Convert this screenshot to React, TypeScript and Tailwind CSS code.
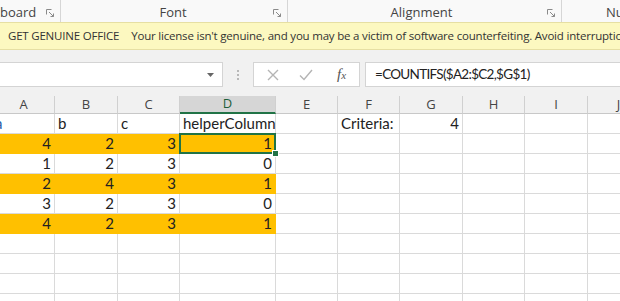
const cols = [
  { key: "A", w: "w-[62px]" },
  { key: "B", w: "w-[63px]" },
  { key: "C", w: "w-[62px]" },
  { key: "D", w: "w-[96px]" },
  { key: "E", w: "w-[62px]" },
  { key: "F", w: "w-[62px]" },
  { key: "G", w: "w-[63px]" },
  { key: "H", w: "w-[62px]" },
  { key: "I", w: "w-[63px]" },
  { key: "J", w: "w-[62px]" },
];

type Cell = { v: string; align?: "l" | "r"; cls?: string };

const rows: { hl: boolean; cells: Cell[] }[] = [
  {
    hl: false,
    cells: [
      { v: "a", align: "l", cls: "text-[#2d5da8] -ml-[1px]" },
      { v: "b", align: "l" },
      { v: "c", align: "l" },
      { v: "helperColumn", align: "l" },
      { v: "" },
      { v: "Criteria:", align: "l" },
      { v: "4" },
    ],
  },
  { hl: true, cells: [{ v: "4" }, { v: "2" }, { v: "3" }, { v: "1" }] },
  { hl: false, cells: [{ v: "1" }, { v: "2" }, { v: "3" }, { v: "0" }] },
  { hl: true, cells: [{ v: "2" }, { v: "4" }, { v: "3" }, { v: "1" }] },
  { hl: false, cells: [{ v: "3" }, { v: "2" }, { v: "3" }, { v: "0" }] },
  { hl: true, cells: [{ v: "4" }, { v: "2" }, { v: "3" }, { v: "1" }] },
  { hl: false, cells: [] },
  { hl: false, cells: [] },
  { hl: false, cells: [] },
  { hl: false, cells: [] },
];

function Launcher() {
  return (
    <svg width="9" height="9" viewBox="0 0 9 9" className="text-[#8a8a8a] mb-[1px]">
      <path d="M0.5 0.5h5M0.5 0.5v5" stroke="currentColor" fill="none" />
      <path d="M3 3l4.5 4.5M7.5 4.5v3h-3" stroke="currentColor" fill="none" />
    </svg>
  );
}

export default function App() {
  return (
    <div className="w-[620px] h-[301px] overflow-hidden bg-white font-['Lato',sans-serif] text-[#222]">
      {/* Ribbon group labels */}
      <div className="h-[22px] flex bg-[#f9f9f9] text-[13px] text-[#444] font-['Open_Sans',sans-serif] leading-none">
        <div className="w-[61px] shrink-0 flex items-end pb-[3px] justify-between pr-[5px] border-r border-[#d6d6d6]">
          <span>board</span>
          <Launcher />
        </div>
        <div className="w-[227px] shrink-0 flex items-end pb-[3px] border-r border-[#d6d6d6] pr-[5px]">
          <span className="flex-1 text-center pl-[12px]">Font</span>
          <Launcher />
        </div>
        <div className="w-[274px] shrink-0 flex items-end pb-[3px] border-r border-[#d6d6d6] pr-[5px]">
          <span className="flex-1 text-center pl-[8px]">Alignment</span>
          <Launcher />
        </div>
        <div className="flex-1 flex items-end pb-[3px] overflow-hidden">
          <span className="pl-[44px] whitespace-nowrap">Number</span>
        </div>
      </div>

      {/* License warning bar */}
      <div className="h-[28px] flex items-center bg-[#fcf8c0] border-y border-[#e6dfa3] whitespace-nowrap overflow-hidden font-['Open_Sans',sans-serif] text-[11.5px] text-[#333] tracking-[-0.2px]">
        <span className="pl-[8px] pr-[12px]">GET GENUINE OFFICE</span>
        <span>
          Your license isn't genuine, and you may be a victim of software counterfeiting. Avoid interruptions
        </span>
      </div>

      {/* Formula bar */}
      <div className="bg-[#f1f1f1] pt-[12px] pb-[9px]">
        <div className="h-[25px] flex items-stretch">
          <div className="w-[223px] shrink-0 bg-white border border-[#d4d4d4] border-l-0 flex items-center justify-end pr-[8px]">
            <svg width="7" height="4" viewBox="0 0 7 4">
              <path d="M0 0h7L3.5 4z" fill="#666" />
            </svg>
          </div>
          <div className="w-[30px] shrink-0 flex items-center justify-center">
            <div className="flex flex-col gap-[2px]">
              <span className="w-[2px] h-[2px] bg-[#b8b8b8]" />
              <span className="w-[2px] h-[2px] bg-[#b8b8b8]" />
              <span className="w-[2px] h-[2px] bg-[#b8b8b8]" />
            </div>
          </div>
          <div className="w-[107px] shrink-0 bg-white border border-[#d4d4d4] flex items-center">
            <svg width="12" height="12" viewBox="0 0 12 12" className="ml-[13px]">
              <path d="M1 1l10 10M11 1L1 11" stroke="#b4b4b4" strokeWidth="1.4" fill="none" />
            </svg>
            <svg width="14" height="12" viewBox="0 0 14 12" className="ml-[20px]">
              <path d="M1 6.5l4 4L13 1" stroke="#b4b4b4" strokeWidth="1.4" fill="none" />
            </svg>
            <span className="ml-[24px] font-['Liberation_Serif',serif] italic text-[15px] text-[#555] leading-none">
              f<span className="text-[11px]">x</span>
            </span>
          </div>
          <div className="w-[5px] shrink-0" />
          <div className="flex-1 bg-white border border-[#d4d4d4] border-r-0 flex items-center pl-[9px] text-[13.5px] tracking-[-0.7px] text-[#222] whitespace-nowrap">
            =COUNTIFS($A2:$C2,$G$1)
          </div>
        </div>
      </div>

      {/* Grid */}
      <div className="-ml-[7px] flex flex-col">
        <div className="flex h-[18px] bg-[#f1f1f1] text-[13px] text-[#444] font-['Open_Sans',sans-serif]">
          {cols.map((c) => (
            <div
              key={c.key}
              className={`${c.w} shrink-0 flex items-center justify-center border-r border-[#d0d0d0] ${
                c.key === "D"
                  ? "bg-[#d6d6d6] border-b-2 border-b-[#217346] text-[#1d5e3a]"
                  : "border-b border-b-[#c8c8c8]"
              }`}
            >
              {c.key}
            </div>
          ))}
        </div>
        {rows.map((r, ri) => (
          <div key={ri} className="flex h-[20px] text-[15px]">
            {cols.map((c, ci) => {
              const cell = r.cells[ci];
              const fill = r.hl && ci < 4;
              const selected = ri === 1 && ci === 3;
              return (
                <div
                  key={c.key}
                  className={`${c.w} shrink-0 relative flex items-end pb-[1px] px-[3px] leading-[18px] border-b border-r whitespace-nowrap ${
                    fill ? "bg-[#ffc000] border-[#ffc000]" : "border-[#dadada]"
                  } ${cell?.align === "l" ? "justify-start" : "justify-end"} ${selected ? "z-10" : ""}`}
                >
                  <span className={cell?.cls ?? ""}>{cell?.v}</span>
                  {selected && (
                    <>
                      <div className="absolute -left-[1px] -top-[1px] -right-[1px] -bottom-[1px] border-2 border-[#217346]" />
                      <div className="absolute -right-[4px] -bottom-[4px] w-[7px] h-[7px] bg-[#217346] border border-white" />
                    </>
                  )}
                </div>
              );
            })}
          </div>
        ))}
      </div>
    </div>
  );
}
